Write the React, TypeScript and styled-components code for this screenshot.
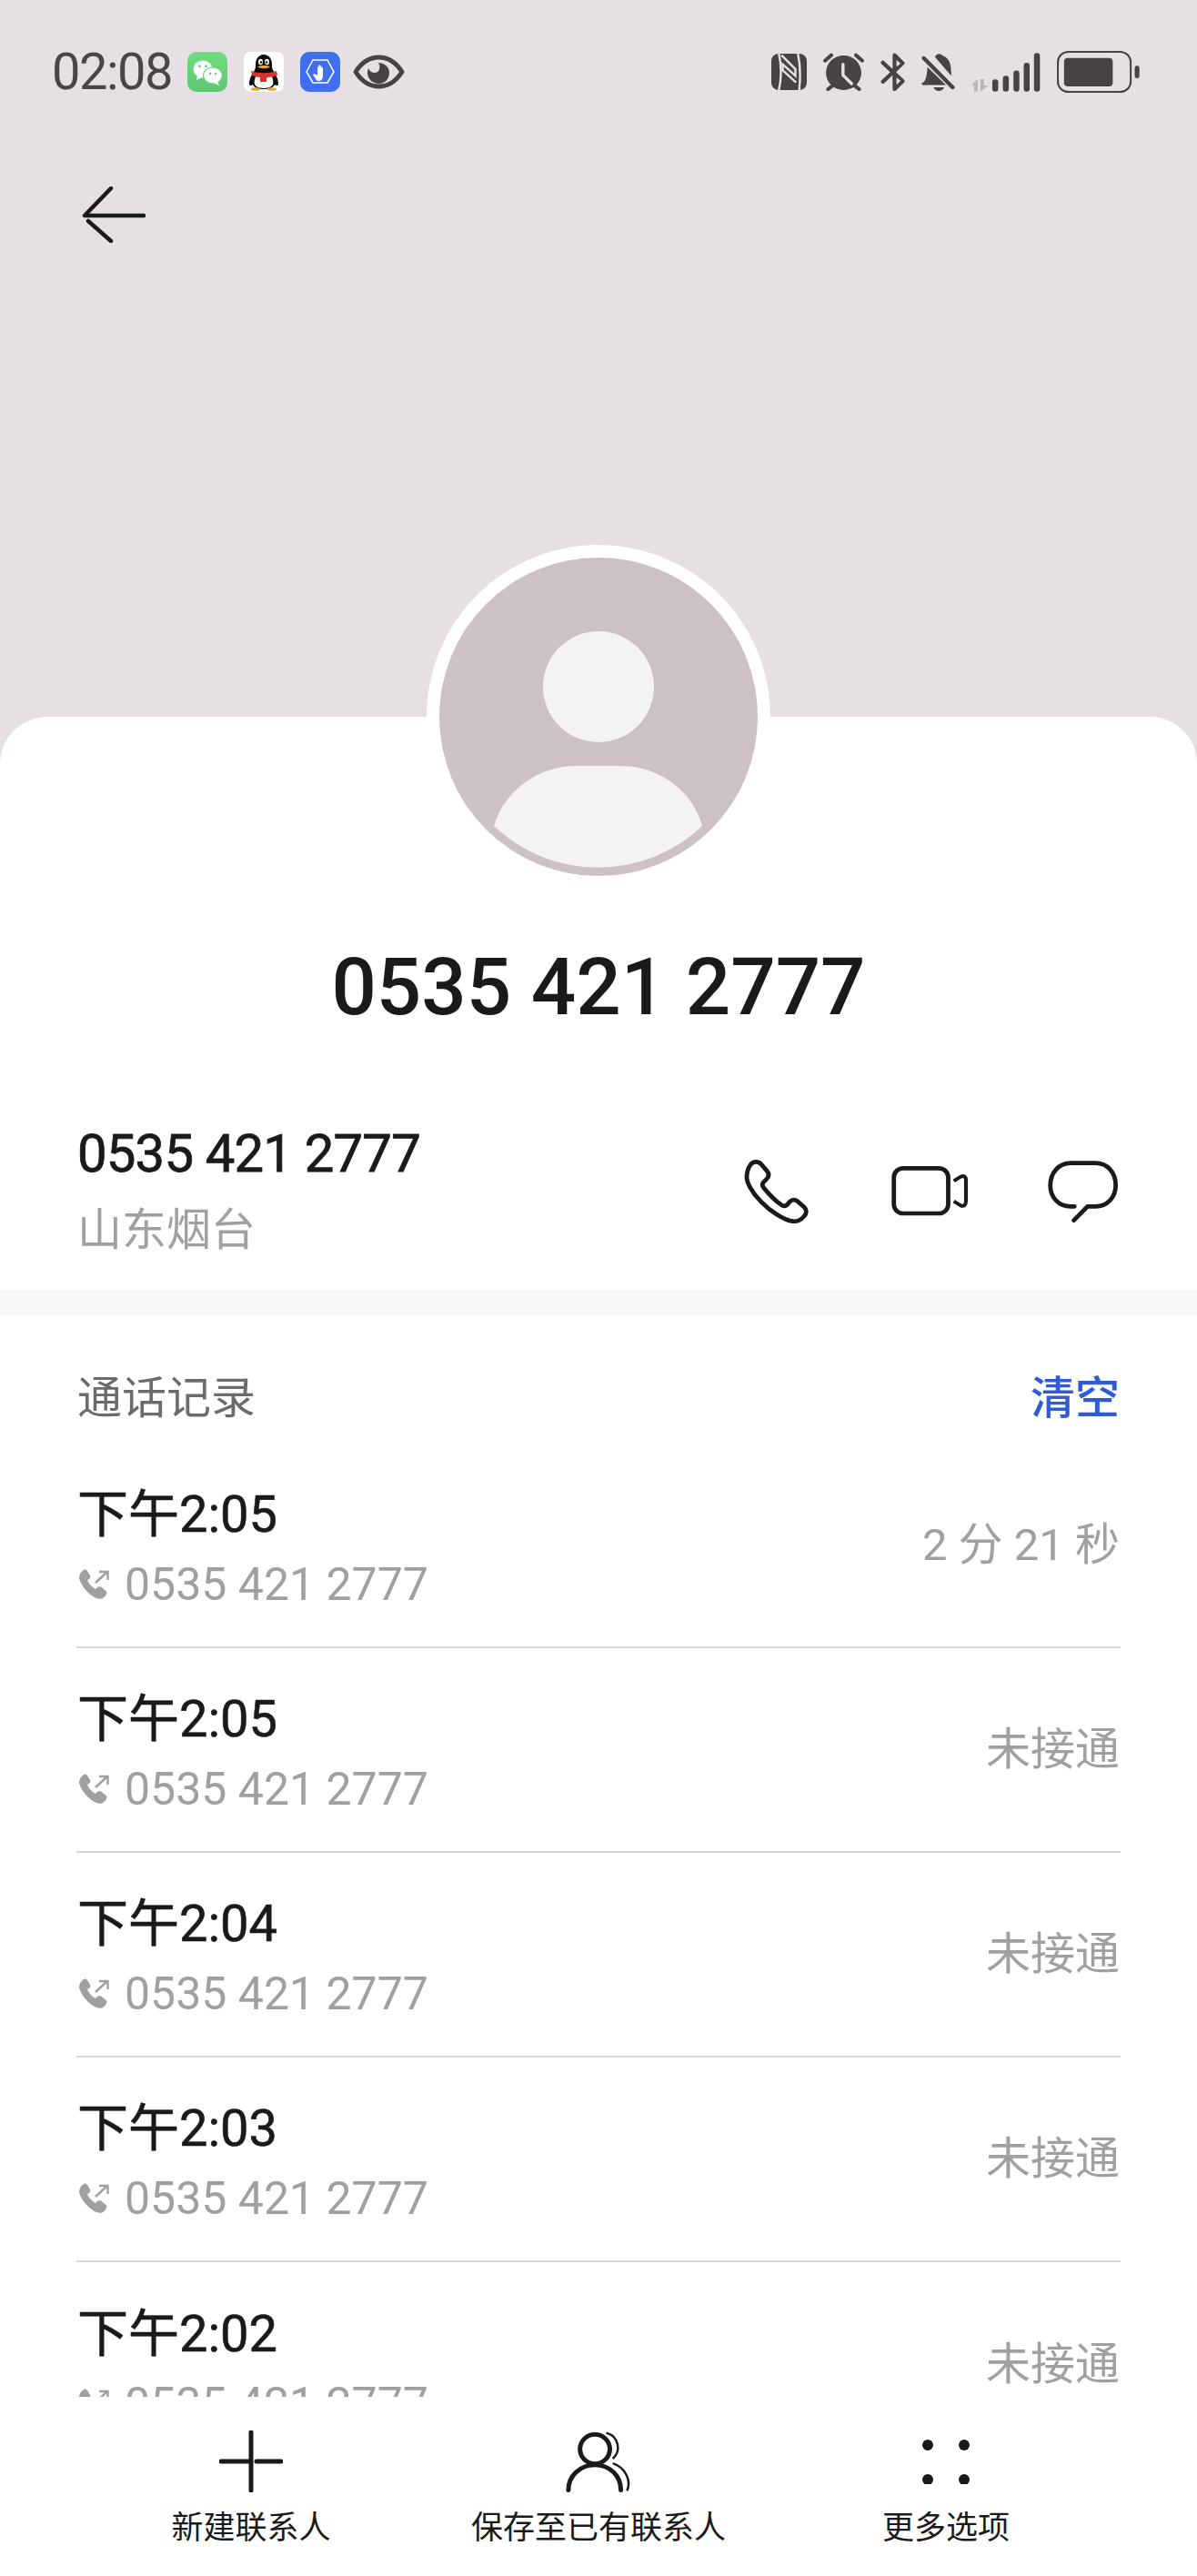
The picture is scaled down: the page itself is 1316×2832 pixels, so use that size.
import React from "react"
import styled, { createGlobalStyle } from "styled-components"

const GlobalStyle = createGlobalStyle`
  html, body {
    margin: 0;
    padding: 0;
    background: #fff;
  }
  * {
    box-sizing: border-box;
  }
`

const Page = styled.div`
  width: 1316px;
  height: 2832px;
  display: flex;
  flex-direction: column;
  overflow: hidden;
  background: #fff;
  color: #1a1a1a;
  font-family: Roboto, "Noto Sans CJK SC", sans-serif;
`

const Header = styled.header`
  height: 840px;
  flex-shrink: 0;
  background: #e6dfe4;
`

const StatusBar = styled.div`
  height: 158px;
  padding: 0 63px 0 57px;
  display: flex;
  align-items: center;
  justify-content: space-between;
`

const StatusGroup = styled.div<{ $gap: number }>`
  display: flex;
  align-items: center;
  gap: ${(p) => p.$gap}px;
`

const Clock = styled.span`
  font-size: 56px;
  line-height: 60px;
  letter-spacing: -1.500px;
  color: #4a4648;
  margin-right: -1px;
`

const EyeSlot = styled.span`
  margin-left: -4px;
`

const BackButton = styled.button`
  display: block;
  margin: 47px 0 0 90px;
  padding: 0;
  width: 70px;
  height: 62px;
  border: 0;
  background: none;
`

const Card = styled.main`
  position: relative;
  flex: 1;
  min-height: 0;
  margin-top: -52px;
  display: flex;
  flex-direction: column;
  background: #fff;
  border-radius: 52px 52px 0 0;
`

const AvatarRing = styled.div`
  width: 378px;
  height: 378px;
  margin: -189px auto 0;
  padding: 14px;
  flex-shrink: 0;
  border-radius: 50%;
  background: #fff;
`

const Title = styled.h1`
  margin: 58px 0 0;
  flex-shrink: 0;
  font-size: 87px;
  line-height: 100px;
  font-weight: 500;
  text-align: center;
  color: #1a1a1a;
`

const ContactRow = styled.section`
  flex-shrink: 0;
  padding: 98px 87px 32px 85px;
  display: flex;
  align-items: center;
  justify-content: space-between;
`

const ContactNumber = styled.div`
  font-size: 58px;
  line-height: 70px;
  letter-spacing: -0.800px;
  -webkit-text-stroke: 0.800px #1a1a1a;
`

const ContactPlace = styled.div`
  margin-top: 17px;
  font-size: 49px;
  line-height: 66px;
  color: #a0a0a0;
`

const Actions = styled.div`
  display: flex;
  align-items: center;
  gap: 88px;
`

const PhoneSlot = styled.span`
  margin-right: 2px;
  margin-left: -2px;
`

const Band = styled.div`
  height: 28px;
  flex-shrink: 0;
  background: #f7f7f7;
`

const HistoryHead = styled.div`
  flex-shrink: 0;
  padding: 62px 85px 19px 85px;
  display: flex;
  justify-content: space-between;
  font-size: 49px;
  line-height: 60px;
`

const HistoryTitle = styled.span`
  color: #6b6b6b;
`

const ClearLink = styled.a`
  color: #2f5bd8;
  font-weight: 500;
`

const CallList = styled.div`
  flex: 1;
  min-height: 0;
  margin: 0 84px;
  overflow: hidden;
`

const CallRow = styled.div`
  height: 225px;
  padding-right: 1px;
  display: flex;
  align-items: center;
  justify-content: space-between;
  border-bottom: 2px solid #d6d6d6;

  &:last-child {
    border-bottom: 0;
  }
`

const CallTime = styled.div`
  padding-left: 1px;
  font-size: 56px;
  line-height: 70px;
  -webkit-text-stroke: 0.600px #1a1a1a;
`

const CallNumber = styled.div`
  margin-top: 17px;
  padding-left: 3px;
  display: flex;
  align-items: center;
  gap: 15px;
  font-size: 50px;
  line-height: 50px;
  color: #a0a0a0;
`

const CallResult = styled.div`
  font-size: 49px;
  line-height: 60px;
  color: #a0a0a0;
`

const BottomBar = styled.nav`
  height: 197px;
  flex-shrink: 0;
  padding: 37px 85px 0;
  display: grid;
  grid-template-columns: repeat(3, 1fr);
  background: #fff;
`

const BarItem = styled.div`
  display: flex;
  flex-direction: column;
  align-items: center;
`

const BarIconSlot = styled.div`
  height: 68px;
  display: flex;
  align-items: center;
  justify-content: center;
`

const BarLabel = styled.span`
  margin-top: 18px;
  font-size: 35px;
  line-height: 44px;
  color: #1a1a1a;
`

const Glyph = styled.svg`
  display: block;
  flex-shrink: 0;
`

const ink = "#474345"

const WeChatIcon = () => (
  <Glyph width="44" height="44" viewBox="0 0 44 44">
    <defs>
      <linearGradient id="wechatBg" x1="0" y1="0" x2="0" y2="1">
        <stop offset="0" stopColor="#6fdc80" />
        <stop offset="1" stopColor="#5fc872" />
      </linearGradient>
    </defs>
    <rect width="44" height="44" rx="10" fill="url(#wechatBg)" />
    <ellipse cx="17" cy="19" rx="10.5" ry="9.5" fill="#fff" />
    <path d="M11 26l-1 5 6-3z" fill="#fff" />
    <ellipse cx="28" cy="26" rx="10.5" ry="9" fill="#fff" stroke="#64cf76" strokeWidth="1.2" />
    <path d="M33 33l2 4-6-3z" fill="#fff" />
    <circle cx="13.5" cy="16" r="1.4" fill="#64cf76" />
    <circle cx="20.5" cy="16" r="1.4" fill="#64cf76" />
    <circle cx="25" cy="24" r="1.2" fill="#64cf76" />
    <circle cx="31" cy="24" r="1.2" fill="#64cf76" />
  </Glyph>
)

const QQIcon = () => (
  <Glyph width="44" height="44" viewBox="0 0 44 44">
    <rect width="44" height="44" rx="8" fill="#fff" />
    <path d="M22 3c6 0 9 5 9 11 0 2 0 4 1 6 3 4 6 10 6 15 0 2-2 3-4 1-1 3-6 5-12 5s-11-2-12-5c-2 2-4 1-4-1 0-5 3-11 6-15 1-2 1-4 1-6 0-6 3-11 9-11z" fill="#0d0d0d" />
    <path d="M14 25c5 2 11 2 16 0 2 4 3 8 2 11-2 3-6 4-10 4s-8-1-10-4c-1-3 0-7 2-11z" fill="#fff" />
    <ellipse cx="18.5" cy="11" rx="2.4" ry="3.2" fill="#fff" />
    <ellipse cx="25.5" cy="11" rx="2.4" ry="3.2" fill="#fff" />
    <circle cx="19" cy="11.5" r="1.2" fill="#0d0d0d" />
    <circle cx="25" cy="11.5" r="1.2" fill="#0d0d0d" />
    <path d="M15 16c4-1.500 10-1.500 14 0-2 3-12 3-14 0z" fill="#f0a51e" />
    <path d="M8 21c8 3 20 3 28 0l1 5c-4 1-7 2-11 2l-1 1v4h-7v-5c-3 0-6-1-9-2z" fill="#d8322f" />
    <ellipse cx="13" cy="41" rx="5" ry="1.800" fill="#f0a51e" />
    <ellipse cx="31" cy="41" rx="5" ry="1.800" fill="#f0a51e" />
  </Glyph>
)

const GuardIcon = () => (
  <Glyph width="44" height="44" viewBox="0 0 44 44">
    <rect width="44" height="44" rx="10" fill="#3f6ff0" />
    <path d="M7 22l7-13h16l7 13-7 12H14z" fill="none" stroke="#fff" strokeWidth="1.500" />
    <path d="M16 24l3 2v-9c0-1 1.500-1 1.500 0v5-7c0-1 1.500-1 1.500 0v7-6c0-1 1.500-1 1.500 0v6-4c0-1 1.500-1 1.500 0v8c0 4-2 6-4.500 6-2 0-3-1-4-3l-2-3c-.7-1 .3-2 1-1.700z" fill="#fff" />
  </Glyph>
)

const EyeIcon = () => (
  <Glyph width="57" height="38" viewBox="0 0 57 38">
    <path d="M3 19C10 8 18 3 28.500 3S47 8 54 19C47 30 39 35 28.500 35S10 30 3 19z" fill="none" stroke={ink} strokeWidth="5" strokeLinejoin="round" />
    <path d="M28 9c6 0 12 4 12 11s-5 12-11.500 12S16 27 16 20c0-2 .5-3.500 1-5 1 3 4 5 7 5 5 0 7-6 4-11z" fill={ink} />
  </Glyph>
)

const NfcIcon = () => (
  <Glyph width="39" height="40" viewBox="200 117 112 120" preserveAspectRatio="none">
    <rect x="200" y="117" width="112" height="120" rx="24" fill={ink} />
    <path d="M224 117c8 38 8 82 0 120" fill="none" stroke="#e6dfe4" strokeWidth="7" />
    <path d="M284 117c8 38 8 82 4 120" fill="none" stroke="#e6dfe4" strokeWidth="7" />
    <path d="M232 122l44 46v22l-40-38v20l42 40" fill="none" stroke="#e6dfe4" strokeWidth="7" />
  </Glyph>
)

const AlarmIcon = () => (
  <Glyph width="45" height="42" viewBox="366 112 132 126" preserveAspectRatio="none">
    <circle cx="432" cy="178" r="57" fill={ink} />
    <path d="M430 150v36l28 28" fill="none" stroke="#e6dfe4" strokeWidth="10" strokeLinecap="round" />
    <path d="M372 138l20-18M492 138l-20-18M382 232l14-11M482 232l-14-11" stroke={ink} strokeWidth="12" strokeLinecap="round" />
  </Glyph>
)

const BluetoothIcon = () => (
  <Glyph width="27" height="42" viewBox="548 112 82 128" preserveAspectRatio="none">
    <path d="M556 145l66 62-27 27V120l27 27-66 62" fill="none" stroke={ink} strokeWidth="13" strokeLinecap="round" strokeLinejoin="round" />
    <path d="M603 140l12 8-12 10zM603 196l12 10-12 12z" fill="#e6dfe4" />
  </Glyph>
)

const BellOffIcon = () => (
  <Glyph width="37" height="42" viewBox="682 112 110 128" preserveAspectRatio="none">
    <path d="M726 126c6-12 18-14 26-4 16 6 24 20 26 38l2 30z" fill={ink} />
    <path d="M702 160l60 60h-74c-6 0-6-6-2-8 12-4 14-30 16-52z" fill={ink} />
    <path d="M722 228h34c-2 8-10 12-17 12s-15-4-17-12z" fill={ink} />
    <path d="M690 130l94 98" stroke={ink} strokeWidth="13" strokeLinecap="round" />
  </Glyph>
)

const SignalIcon = () => (
  <Glyph width="76" height="43" viewBox="843 110 222 128" preserveAspectRatio="none">
    <path d="M843 216l20-20v41h-11v-21zM872 196h11v21h14l-25 20z" fill="#b9b3b7" />
    <rect x="910" y="197" width="19" height="40" rx="9" fill={ink} />
    <rect x="944" y="185" width="19" height="52" rx="9" fill={ink} />
    <rect x="978" y="168" width="19" height="69" rx="9" fill={ink} />
    <rect x="1011" y="143" width="19" height="94" rx="9" fill={ink} />
    <rect x="1044" y="111" width="19" height="126" rx="9" fill={ink} />
  </Glyph>
)

const BatteryIcon = () => (
  <Glyph width="91" height="46" viewBox="1117 104 267 138" preserveAspectRatio="none">
    <rect x="1120" y="107" width="235" height="132" rx="34" fill="none" stroke={ink} strokeWidth="6" />
    <rect x="1140" y="127" width="157" height="94" rx="12" fill={ink} />
    <rect x="1368" y="153" width="15" height="41" rx="7" fill={ink} />
  </Glyph>
)

const BackIcon = () => (
  <Glyph width="70" height="62" viewBox="0 0 70 62">
    <path d="M32 2L3 32h65M7 38l25 22" fill="none" stroke="#1a1a1a" strokeWidth="4.500" strokeLinecap="round" strokeLinejoin="round" />
  </Glyph>
)

const AvatarArt = () => (
  <Glyph width="350" height="350" viewBox="0 0 350 350">
    <circle cx="175" cy="175" r="175" fill="#cec1c6" />
    <circle cx="175" cy="142" r="61" fill="#f4f2f3" />
    <path d="M60 295C72 255 110 229 150 229h50c40 0 78 26 89 66A166 166 0 0 1 60 295z" fill="#f4f2f3" />
  </Glyph>
)

const PhoneIcon = () => (
  <Glyph width="73" height="72" viewBox="110 118 212 216" preserveAspectRatio="none">
    <path
      d="M132 140C140 126 158 124 168 136L186 158C194 168 192 178 184 186L176 194C170 200 170 206 176 214C192 234 212 256 232 270C240 276 246 274 252 268L258 260C266 252 276 252 284 258L304 276C314 286 314 298 304 308C296 318 284 326 268 324C240 320 196 290 168 260C140 232 118 194 122 170C124 156 126 148 132 140Z"
      fill="none"
      stroke="#1a1a1a"
      strokeWidth="14"
      strokeLinejoin="round"
    />
  </Glyph>
)

const VideoIcon = () => (
  <Glyph width="84" height="55" viewBox="585 146 246 165" preserveAspectRatio="none">
    <rect x="593" y="153" width="175" height="149" rx="30" fill="none" stroke="#1a1a1a" strokeWidth="14" />
    <path d="M786 195l22-14c10-5 17-1 17 11v70c0 13-7 18-17 14l-22-14" fill="none" stroke="#1a1a1a" strokeWidth="12" />
  </Glyph>
)

const ChatIcon = () => (
  <Glyph width="77" height="68" viewBox="1086 132 226 200" preserveAspectRatio="none">
    <path
      d="M1172 280h-12c-40 0-66-30-66-68 0-42 28-72 66-72h80c38 0 65 30 65 72 0 38-27 68-65 68h-26l-44 45"
      fill="none"
      stroke="#1a1a1a"
      strokeWidth="14"
      strokeLinecap="round"
      strokeLinejoin="round"
    />
  </Glyph>
)

const OutgoingIcon = () => (
  <Glyph width="35" height="35" viewBox="0 0 35 35">
    <path d="M5 1c2-1 3 0 4 1l3 5c1 1 0 3-1 4l-2 1c1 3 5 8 9 10l2-2c1-1 2-1 4-.5l5 4c1 1 2 2 1 4-2 4-5 6-9 5C13 31 2 19 0 10 0 6 2 3 5 1z" fill="#a0a0a0" />
    <path d="M18 15L31 3M22 3h9.500v9" fill="none" stroke="#a0a0a0" strokeWidth="2.400" />
  </Glyph>
)

const PlusIcon = () => (
  <Glyph width="70" height="68" viewBox="0 0 70 68">
    <path d="M35 2v64M2 34h30M41 34h27" fill="none" stroke="#1a1a1a" strokeWidth="5" strokeLinecap="round" />
  </Glyph>
)

const PersonIcon = () => (
  <Glyph width="72" height="67" viewBox="1240 95 202 200" preserveAspectRatio="none">
    <ellipse cx="1330" cy="153" rx="46" ry="48" fill="none" stroke="#1a1a1a" strokeWidth="14" />
    <path d="M1248 288c0-48 37-83 82-83s80 35 80 83" fill="none" stroke="#1a1a1a" strokeWidth="14" strokeLinecap="round" />
    <path d="M1365 100c40 12 46 60 20 85" fill="none" stroke="#1a1a1a" strokeWidth="7" />
    <path d="M1385 200c40 14 58 58 44 90" fill="none" stroke="#1a1a1a" strokeWidth="7" />
  </Glyph>
)

const MoreIcon = () => (
  <Glyph width="54" height="50" viewBox="0 0 54 50">
    <circle cx="7" cy="7" r="6" fill="#1a1a1a" />
    <circle cx="47" cy="7" r="6" fill="#1a1a1a" />
    <circle cx="7" cy="45" r="6" fill="#1a1a1a" />
    <circle cx="47" cy="45" r="6" fill="#1a1a1a" />
  </Glyph>
)

const number = "0535 421 2777"

const calls = [
  { time: "下午2:05", result: "2 分 21 秒" },
  { time: "下午2:05", result: "未接通" },
  { time: "下午2:04", result: "未接通" },
  { time: "下午2:03", result: "未接通" },
  { time: "下午2:02", result: "未接通" },
]

const barItems = [
  { label: "新建联系人", icon: <PlusIcon /> },
  { label: "保存至已有联系人", icon: <PersonIcon /> },
  { label: "更多选项", icon: <MoreIcon /> },
]

const App: React.FC = () => {
  return (
    <Page>
      <GlobalStyle />
      <Header>
        <StatusBar>
          <StatusGroup $gap={18}>
            <Clock>02:08</Clock>
            <WeChatIcon />
            <QQIcon />
            <GuardIcon />
            <EyeSlot>
              <EyeIcon />
            </EyeSlot>
          </StatusGroup>
          <StatusGroup $gap={18}>
            <NfcIcon />
            <AlarmIcon />
            <BluetoothIcon />
            <BellOffIcon />
            <SignalIcon />
            <BatteryIcon />
          </StatusGroup>
        </StatusBar>
        <BackButton>
          <BackIcon />
        </BackButton>
      </Header>
      <Card>
        <AvatarRing>
          <AvatarArt />
        </AvatarRing>
        <Title>{number}</Title>
        <ContactRow>
          <div>
            <ContactNumber>{number}</ContactNumber>
            <ContactPlace>山东烟台</ContactPlace>
          </div>
          <Actions>
            <PhoneSlot>
              <PhoneIcon />
            </PhoneSlot>
            <VideoIcon />
            <ChatIcon />
          </Actions>
        </ContactRow>
        <Band />
        <HistoryHead>
          <HistoryTitle>通话记录</HistoryTitle>
          <ClearLink>清空</ClearLink>
        </HistoryHead>
        <CallList>
          {calls.map((call, i) => (
            <CallRow key={i}>
              <div>
                <CallTime>{call.time}</CallTime>
                <CallNumber>
                  <OutgoingIcon />
                  {number}
                </CallNumber>
              </div>
              <CallResult>{call.result}</CallResult>
            </CallRow>
          ))}
        </CallList>
        <BottomBar>
          {barItems.map((item) => (
            <BarItem key={item.label}>
              <BarIconSlot>{item.icon}</BarIconSlot>
              <BarLabel>{item.label}</BarLabel>
            </BarItem>
          ))}
        </BottomBar>
      </Card>
    </Page>
  )
}

export default App
